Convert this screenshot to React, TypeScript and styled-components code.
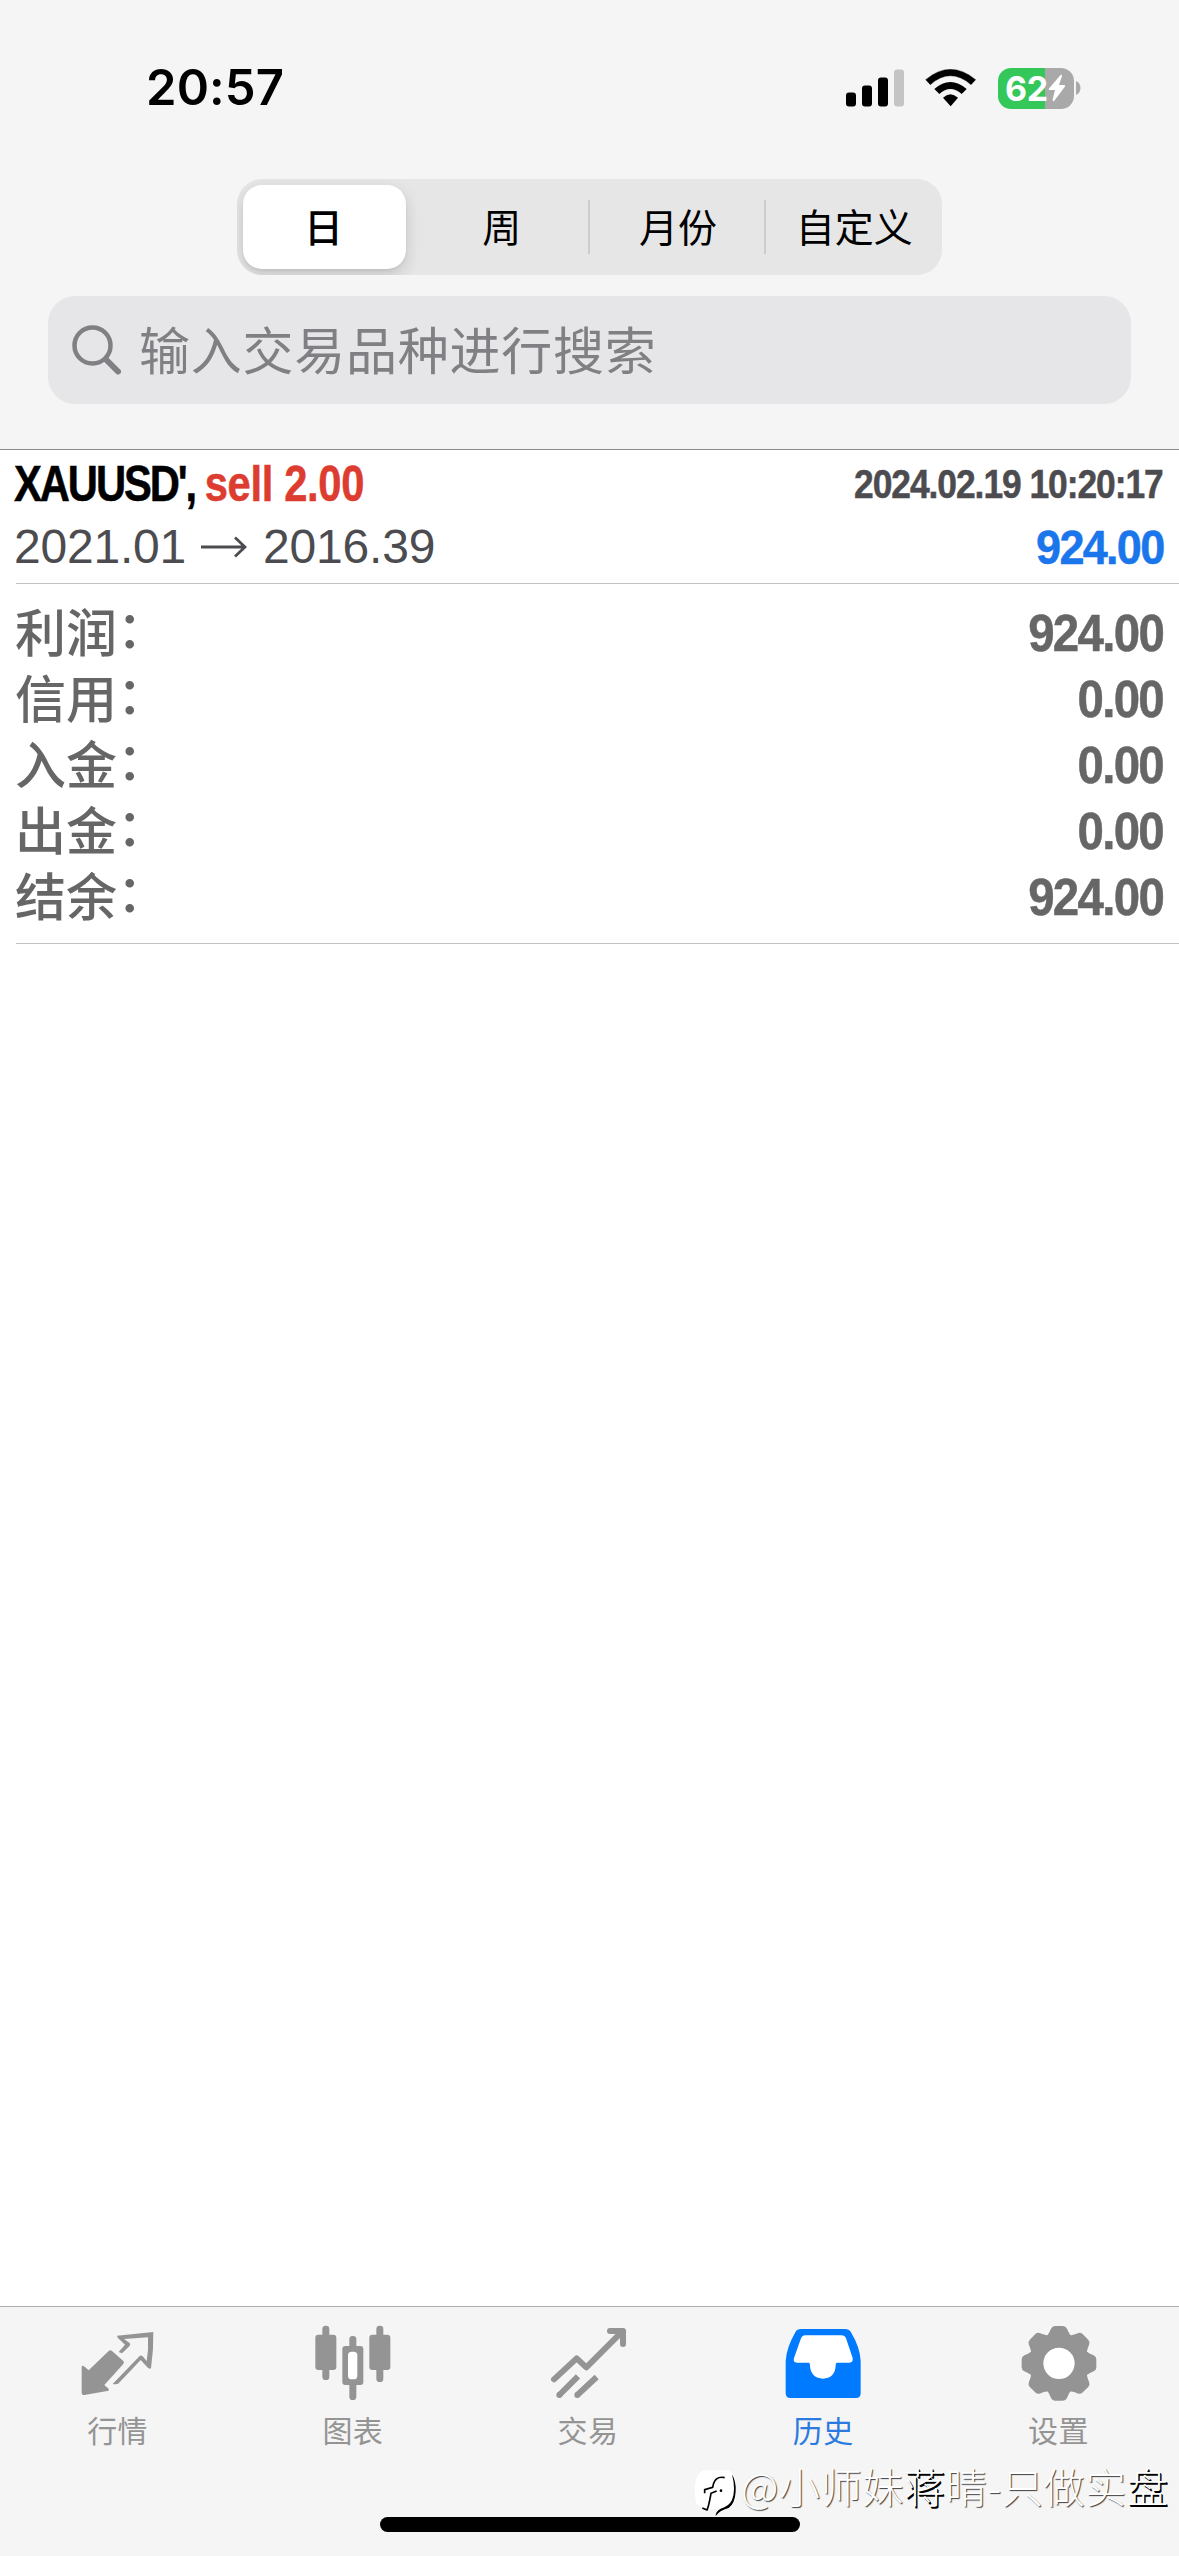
import React from "react";
import styled, { createGlobalStyle } from "styled-components";

const GlobalStyle = createGlobalStyle`
  * { box-sizing: border-box; }
  html, body { margin: 0; padding: 0; background: #fff; }
`;

const cjk = `"Liberation Sans", "Noto Sans CJK SC", sans-serif`;

const Screen = styled.div`
  position: relative;
  display: flex;
  flex-direction: column;
  width: 1179px;
  height: 2556px;
  overflow: hidden;
  background: #fff;
  font-family: ${cjk};
`;

const Header = styled.header`
  display: flex;
  flex-direction: column;
  align-items: center;
  height: 450px;
  flex: none;
  background: #f5f5f5;
  border-bottom: 1px solid #8a8a8a;
`;

const StatusBar = styled.div`
  display: flex;
  justify-content: space-between;
  align-items: center;
  width: 100%;
  height: 179px;
  padding: 0 98px 3px 146px;
`;

const Clock = styled.span`
  font: 600 49px/60px Inter, sans-serif;
  letter-spacing: 0.1px;
  color: #000;
`;

const StatusIcons = styled.div`
  display: flex;
  align-items: center;
`;

const Segments = styled.div`
  display: grid;
  grid-template-columns: repeat(4, 1fr);
  width: 705px;
  height: 96px;
  border-radius: 25px;
  background: #e6e6e6;
  overflow: hidden;
`;

const Segment = styled.div<{ $divider?: boolean }>`
  display: flex;
  align-items: center;
  justify-content: center;
  font-size: 39px;
  color: #000;
  padding: 0 0 4px 1px;
  background: ${(p) =>
    p.$divider
      ? "linear-gradient(#cdcdcd, #cdcdcd) right 0 top 21px / 2px 54px no-repeat"
      : "none"};
`;

const ActiveSegment = styled.div`
  display: flex;
  align-items: center;
  justify-content: center;
  width: 163px;
  height: 84px;
  margin: 6px 0 0 6px;
  padding: 0 2px 4px 0;
  border-radius: 19px;
  background: #fff;
  box-shadow: 0 6px 16px rgba(0, 0, 0, 0.15), 0 2px 3px rgba(0, 0, 0, 0.05);
  font-size: 39px;
  font-weight: 500;
`;

const SearchField = styled.div`
  display: flex;
  align-items: center;
  width: 1083px;
  height: 108px;
  margin-top: 21px;
  padding-left: 23px;
  border-radius: 27px;
  background: #e6e6e8;
  color: #808084;
`;

const Placeholder = styled.span`
  margin-left: 16px;
  padding-top: 5px;
  font-size: 51px;
  line-height: 70px;
  letter-spacing: 0.75px;
`;

const Deal = styled.section`
  display: flex;
  flex-direction: column;
  height: 134px;
  flex: none;
  margin-left: 16px;
  padding: 2px 16px 0 0;
  border-bottom: 1px solid #c2c2c4;
`;

const DealLine = styled.div`
  display: flex;
  justify-content: space-between;
  align-items: center;
  height: 63px;
  margin-left: -2px;
  white-space: nowrap;
`;

const Condensed = styled.span<{
  $size: number;
  $scale: number;
  $color: string;
  $side: "left" | "right";
  $tracking: number;
}>`
  display: inline-block;
  font-size: ${(p) => p.$size}px;
  line-height: 60px;
  font-weight: 700;
  letter-spacing: ${(p) => p.$tracking}px;
  color: ${(p) => p.$color};
  -webkit-text-stroke: 0.5px currentColor;
  transform: scaleX(${(p) => p.$scale});
  transform-origin: ${(p) => p.$side} center;
`;

const Side = styled.span`
  color: #dd3c30;
  letter-spacing: -0.4px;
`;

const Prices = styled.span`
  display: flex;
  align-items: center;
  font-size: 48px;
  line-height: 60px;
  letter-spacing: -0.2px;
  color: #4c4c50;
`;

const Summary = styled.section`
  display: flex;
  flex-direction: column;
  height: 360px;
  flex: none;
  margin-left: 16px;
  padding: 17px 16px 0 0;
  border-bottom: 1px solid #c2c2c4;
`;

const SummaryRow = styled.div`
  display: flex;
  justify-content: space-between;
  align-items: center;
  height: 66px;
`;

const SummaryLabel = styled.span`
  margin-left: -1px;
  padding-top: 2px;
  font-size: 51px;
  line-height: 66px;
  font-weight: 500;
  color: #666;
`;

const Colon = styled.span`
  display: inline-block;
  transform: translateY(-4px);
`;

const Filler = styled.main`
  flex: 1;
`;

const TabBar = styled.nav`
  display: grid;
  grid-template-columns: repeat(5, 1fr);
  height: 250px;
  flex: none;
  padding: 13px 3px 0 0;
  border-top: 1px solid #adadad;
  background: #f5f5f5;
`;

const Tab = styled.div<{ $active?: boolean }>`
  display: flex;
  flex-direction: column;
  align-items: center;
  font-size: 30px;
  line-height: 40px;
  letter-spacing: 0.4px;
  color: ${(p) => (p.$active ? "#2b7ae0" : "#949494")};
`;

const TabIcon = styled.svg`
  width: 90px;
  height: 85px;
  margin-bottom: 7px;
`;

const HomeIndicator = styled.div`
  position: absolute;
  left: 380px;
  top: 2517px;
  width: 420px;
  height: 15px;
  border-radius: 8px;
  background: #000;
`;

const Watermark = styled.div`
  position: absolute;
  left: 692px;
  top: 2464px;
  display: flex;
  align-items: flex-start;
  white-space: nowrap;
  font-family: "Noto Sans CJK SC", sans-serif;
  font-weight: 300;
  font-size: 41px;
  line-height: 50px;
  color: #fff;
  text-shadow: 1px 1px 1px rgba(0, 0, 0, 0.75);
`;

const WatermarkText = styled.span`
  margin: -4px 0 0 -1px;
  letter-spacing: 0.7px;
`;

const Strong = styled.span`
  text-shadow: 1px 1px 0 #000, 1.5px 1.5px 0 #000;
`;

const SignalIcon = () => (
  <svg width="58" height="38" viewBox="0 0 58 38">
    <rect x="0" y="23.500" width="10" height="14" rx="3" />
    <rect x="16" y="16.500" width="10" height="21" rx="3" />
    <rect x="32" y="8.500" width="10" height="29" rx="3" />
    <rect x="48" y="0.500" width="10" height="37" rx="3" fill="#c4c4c4" />
  </svg>
);

const Wifi = styled.svg`
  margin-left: 21px;
`;

const WifiIcon = () => (
  <Wifi width="52" height="38" viewBox="378 86 156 114">
    <path d="M380 118Q454 55 530 118L516 133Q454 80 394 133Z" strokeLinejoin="round" stroke="#000" strokeWidth="1" />
    <path d="M406 146Q454 104 503 146L488 161Q454 131 421 161Z" />
    <path d="M432 172Q454 151 477 172L455 198Z" />
  </Wifi>
);

const BatteryBox = styled.div`
  display: flex;
  align-items: center;
  margin-left: 21px;
`;

const BatteryBody = styled.div`
  display: flex;
  align-items: center;
  width: 76px;
  height: 41px;
  padding-left: 7px;
  border-radius: 13px;
  background: linear-gradient(90deg, #34c759 62%, #a9a9a9 62%);
  color: #fff;
  font: 700 34px/41px Inter, sans-serif;
  letter-spacing: -0.3px;
`;

const CandleIcon = () => (
  <TabIcon viewBox="923 90 270 255" fill="#949494">
    <rect x="966" y="107" width="21" height="163" rx="10" />
    <rect x="945" y="134" width="63" height="106" rx="9" />
    <rect x="1128" y="107" width="21" height="169" rx="10" />
    <rect x="1107" y="134" width="63" height="106" rx="9" />
    <rect x="1047" y="138" width="21" height="192" rx="10" />
    <rect x="1026" y="168" width="63" height="117" rx="9" />
    <rect x="1043" y="185" width="28" height="83" rx="11" fill="#fff" />
  </TabIcon>
);

const QuotesIcon = () => (
  <TabIcon viewBox="218 90 270 255" fill="#949494">
    <path d="M250 228L265 241L325 183Q330 178 335 183L369 213Q373 217 369 222L312 285L325 296V302L252 315Q244 315 244 308V232Q244 225 250 228Z" />
    <path d="M350 137L459 126Q460 180 452 235Q447 238 441 232L421 210L355 280Q351 284 337 282L418 198Q422 194 427 199L439 213Q445 180 443 142L371 147L388 159Q392 164 387 169L365 190L355 186L374 164L352 143Z" />
  </TabIcon>
);

const TradeIcon = () => (
  <TabIcon viewBox="129 90 270 255" fill="none" stroke="#949494" strokeWidth="18">
    <path d="M162 268L230 205L259 232L367 124" strokeLinecap="round" strokeLinejoin="round" />
    <path d="M330 123H369V162" strokeLinecap="round" strokeLinejoin="round" />
    <path d="M178 315L234 259M232 315L290 261" />
    <circle cx="178" cy="315" r="9" fill="#949494" stroke="none" />
    <circle cx="232" cy="315" r="9" fill="#949494" stroke="none" />
  </TabIcon>
);

const HistoryIcon = () => (
  <TabIcon viewBox="835 90 270 255">
    <path
      fill="#007aff"
      d="M904 117H1036Q1048 117 1054 127Q1082 174 1083 214V310Q1083 324 1069 324H872Q858 324 858 310V214Q860 174 887 127Q892 117 904 117Z"
    />
    <path
      fill="#fff"
      d="M915 136H1026Q1035 136 1039 145L1059 204Q1061 218 1049 218H1011Q1008 218 1008 226C1008 252 992 266 970 266S931 252 931 226Q931 218 928 218H892Q879 218 883 204L904 145Q908 136 915 136Z"
    />
  </TabIcon>
);

const GearIcon = () => (
  <TabIcon viewBox="1060 90 270 255" fill="#949494">
    <circle cx="1198" cy="220" r="68.500" fill="#fff" stroke="#949494" strokeWidth="43" />
    {[0, 45, 90, 135, 180, 225, 270, 315].map((a) => (
      <path
        key={a}
        transform={`translate(1198 220) rotate(${a})`}
        d="M-40 -78Q-32 -86 -29 -93L-24 -104Q-20 -112 -12 -112H12Q20 -112 24 -104L29 -93Q32 -86 40 -78Z"
      />
    ))}
  </TabIcon>
);

const Arrow = styled.svg`
  margin: 0 16px 0 15px;
`;

const summary = [
  ["利润", "924.00"],
  ["信用", "0.00"],
  ["入金", "0.00"],
  ["出金", "0.00"],
  ["结余", "924.00"],
];

const tabs = [
  { label: "行情", Icon: QuotesIcon },
  { label: "图表", Icon: CandleIcon },
  { label: "交易", Icon: TradeIcon },
  { label: "历史", Icon: HistoryIcon, active: true },
  { label: "设置", Icon: GearIcon },
];

export default function App() {
  return (
    <Screen>
      <GlobalStyle />
      <Header>
        <StatusBar>
          <Clock>20:57</Clock>
          <StatusIcons>
            <SignalIcon />
            <WifiIcon />
            <BatteryBox>
              <BatteryBody>
                62
                <svg width="18" height="28" viewBox="0 0 18 28" fill="#fff">
                  <path d="M12.500 1L1 14.500Q0 16 2 16H7L4.500 26Q5 28 6.500 26.500L17 12.500Q18 11 16 11H11L14 2Q14 0 12.500 1Z" />
                </svg>
              </BatteryBody>
              <svg width="7" height="14" viewBox="0 0 7 14">
                <path d="M2 0Q6.500 2 6.500 7T2 14Z" fill="#a9a9a9" />
              </svg>
            </BatteryBox>
          </StatusIcons>
        </StatusBar>
        <Segments>
          <ActiveSegment>日</ActiveSegment>
          <Segment $divider>周</Segment>
          <Segment $divider>月份</Segment>
          <Segment>自定义</Segment>
        </Segments>
        <SearchField>
          <svg width="52" height="52" viewBox="0 0 52 52" fill="none" stroke="#808084" strokeLinecap="round">
            <circle cx="21.500" cy="21.500" r="18" strokeWidth="4.500" />
            <path d="M35 35.500L47 47.500" strokeWidth="6" />
          </svg>
          <Placeholder>输入交易品种进行搜索</Placeholder>
        </SearchField>
      </Header>

      <Deal>
        <DealLine>
          <Condensed $size={50} $scale={0.835} $color="#000" $side="left" $tracking={-2.5}>
            XAUUSD', <Side>sell 2.00</Side>
          </Condensed>
          <Condensed $size={40} $scale={0.885} $color="#4c4c50" $side="right" $tracking={-1.2}>
            2024.02.19 10:20:17
          </Condensed>
        </DealLine>
        <DealLine>
          <Prices>
            2021.01
            <Arrow width="46" height="24" viewBox="0 0 46 24" fill="none" stroke="#4c4c50" strokeWidth="2.800">
              <path d="M0 12H44M34 2.500L44 12L34 21.500" />
            </Arrow>
            2016.39
          </Prices>
          <Condensed $size={49} $scale={0.92} $color="#1a76ea" $side="right" $tracking={-1.9}>
            924.00
          </Condensed>
        </DealLine>
      </Deal>

      <Summary>
        {summary.map(([label, value]) => (
          <SummaryRow key={label}>
            <SummaryLabel>
              {label}
              <Colon>：</Colon>
            </SummaryLabel>
            <Condensed $size={51} $scale={0.93} $color="#666" $side="right" $tracking={-1.8}>
              {value}
            </Condensed>
          </SummaryRow>
        ))}
      </Summary>

      <Filler />

      <TabBar>
        {tabs.map(({ label, Icon, active }) => (
          <Tab key={label} $active={active}>
            <Icon />
            {label}
          </Tab>
        ))}
      </TabBar>

      <HomeIndicator />
      <Watermark>
        <svg width="50" height="56" viewBox="96 522 150 168">
          <path d="M128 541H200Q228 544 229 590Q230 640 212 655Q180 665 166 680Q165 662 175 658H150Q120 655 108 640Q96 560 128 541Z" fill="#fff" />
          <path d="M216 553Q229 575 227 605Q225 640 206 654Q178 662 167 678Q166 664 182 656Q206 650 216 630Q228 600 216 553Z" fill="#000" />
          <path d="M194 563Q164 556 158 592L134 599V610M170 603L153 610Q146 650 141 660L127 654" fill="none" stroke="#000" strokeWidth="5" />
          <circle cx="183" cy="602" r="4" fill="#000" />
        </svg>
        <WatermarkText>
          @小师妹<Strong>蒋</Strong>晴-只做实<Strong>盘</Strong>
        </WatermarkText>
      </Watermark>
    </Screen>
  );
}
